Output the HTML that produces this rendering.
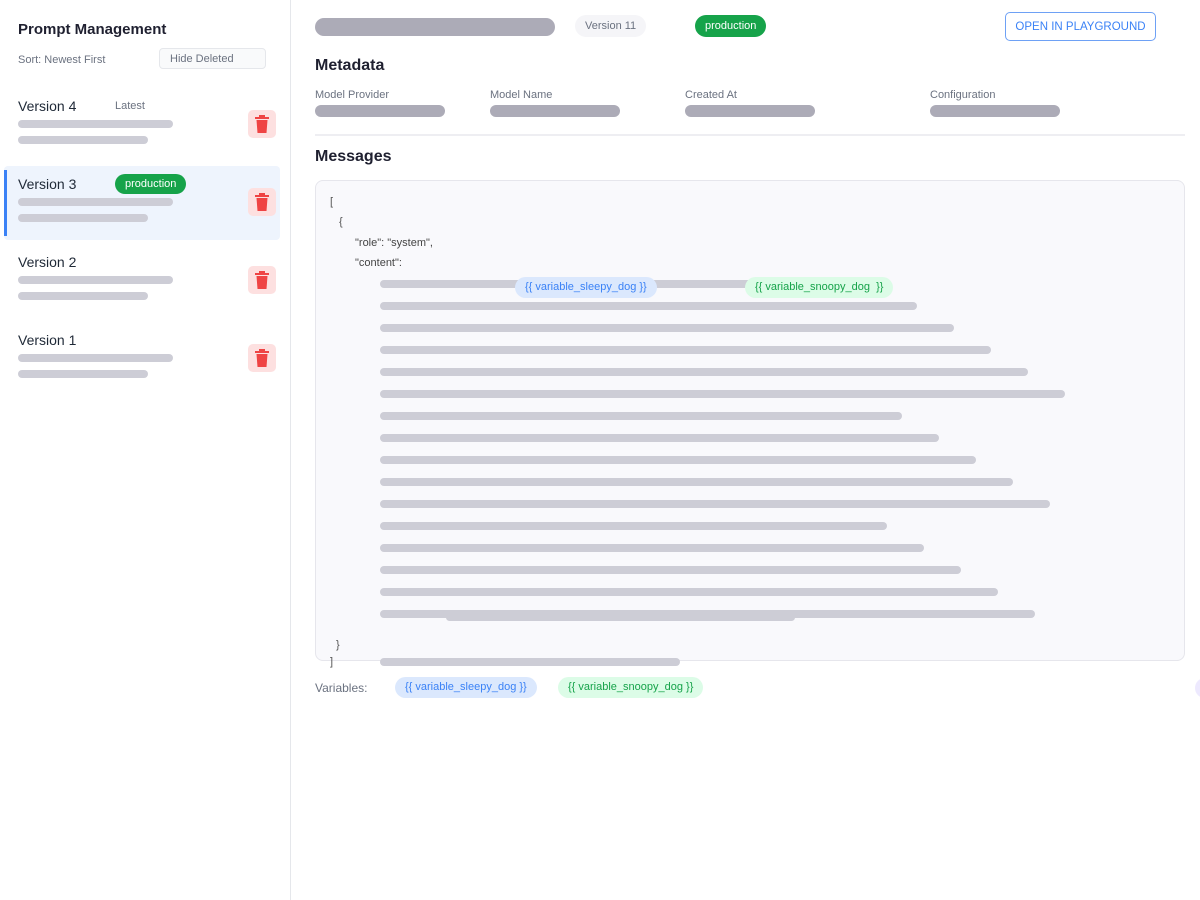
<!DOCTYPE html>
<html><head><style>
*{margin:0;padding:0;box-sizing:border-box}
body{width:1200px;height:900px;background:#fff;font-family:"Liberation Sans",sans-serif;position:relative;overflow:hidden;color:#1f2937}
.a{position:absolute}
.b{position:absolute;height:8px;border-radius:4px;background:#cdcdd6}
.d{position:absolute;height:12px;border-radius:6px;background:#acabb7}
.t{position:absolute;width:28px;height:28px;border-radius:5px;background:#fde0e0}
.t svg{position:absolute;left:6px;top:5px}
.s{font-size:12px;color:#6b7280}
.pill{position:absolute;border-radius:11px;font-size:11px;padding:0 10px;line-height:20px}
</style></head><body>
<div class="a" style="left:290px;top:0;width:1px;height:900px;background:#e5e7eb"></div>
<div class="a" style="left:18px;top:21px;font-size:15px;font-weight:bold;color:#1f2030">Prompt Management</div>
<div class="a s" style="left:18px;top:54px;font-size:11px">Sort: Newest First</div>
<div class="a" style="left:159px;top:48px;width:107px;height:21px;border:1px solid #e5e7eb;border-radius:4px;background:#f9fafb;font-size:11px;color:#6b7280;padding-left:10px;line-height:20px">Hide Deleted</div>

<div class="a" style="left:4px;top:166px;width:276px;height:74px;background:#eef4fd;border-radius:4px"></div>
<div class="a" style="left:4px;top:170px;width:3px;height:66px;background:#3b82f6"></div>

<div class="a" style="left:18px;top:98px;font-size:14px">Version 4</div>
<div class="a s" style="left:115px;top:100px;font-size:11px">Latest</div>
<div class="b" style="left:18px;top:120px;width:155px"></div><div class="b" style="left:18px;top:136px;width:130px"></div>
<div class="t" style="left:248px;top:110px"><svg width="16" height="18" viewBox="0 0 16 18"><rect x="1" y="2" width="14" height="2" fill="#ef4444"/><rect x="5" y="0" width="6" height="3" fill="#ef4444"/><path d="M2.5 5h11l-1 13h-9z" fill="#ef4444"/></svg></div>

<div class="a" style="left:18px;top:176px;font-size:14px">Version 3</div>
<div class="pill" style="left:115px;top:174px;background:#16a34a;color:#fff">production</div>
<div class="b" style="left:18px;top:198px;width:155px"></div><div class="b" style="left:18px;top:214px;width:130px"></div>
<div class="t" style="left:248px;top:188px"><svg width="16" height="18" viewBox="0 0 16 18"><rect x="1" y="2" width="14" height="2" fill="#ef4444"/><rect x="5" y="0" width="6" height="3" fill="#ef4444"/><path d="M2.5 5h11l-1 13h-9z" fill="#ef4444"/></svg></div>

<div class="a" style="left:18px;top:254px;font-size:14px">Version 2</div>
<div class="b" style="left:18px;top:276px;width:155px"></div><div class="b" style="left:18px;top:292px;width:130px"></div>
<div class="t" style="left:248px;top:266px"><svg width="16" height="18" viewBox="0 0 16 18"><rect x="1" y="2" width="14" height="2" fill="#ef4444"/><rect x="5" y="0" width="6" height="3" fill="#ef4444"/><path d="M2.5 5h11l-1 13h-9z" fill="#ef4444"/></svg></div>

<div class="a" style="left:18px;top:332px;font-size:14px">Version 1</div>
<div class="b" style="left:18px;top:354px;width:155px"></div><div class="b" style="left:18px;top:370px;width:130px"></div>
<div class="t" style="left:248px;top:344px"><svg width="16" height="18" viewBox="0 0 16 18"><rect x="1" y="2" width="14" height="2" fill="#ef4444"/><rect x="5" y="0" width="6" height="3" fill="#ef4444"/><path d="M2.5 5h11l-1 13h-9z" fill="#ef4444"/></svg></div>

<!-- main -->
<div class="a" style="left:315px;top:18px;width:240px;height:18px;border-radius:9px;background:#acabb7"></div>
<div class="pill" style="left:575px;top:15px;background:#f5f5f8;color:#6b7280;padding:0 10px;line-height:22px">Version 11</div>
<div class="pill" style="left:695px;top:15px;background:#16a34a;color:#fff;line-height:22px">production</div>
<div class="a" style="left:1005px;top:12px;width:151px;height:29px;border:1.5px solid #6ea1f5;border-radius:5px;color:#3b82f6;font-size:11.5px;text-align:center;line-height:28px">OPEN IN PLAYGROUND</div>

<div class="a" style="left:315px;top:57px;font-size:16px;font-weight:bold;color:#1f2030">Metadata</div>
<div class="a s" style="left:315px;top:89px;font-size:11px">Model Provider</div>
<div class="a s" style="left:490px;top:89px;font-size:11px">Model Name</div>
<div class="a s" style="left:685px;top:89px;font-size:11px">Created At</div>
<div class="a s" style="left:930px;top:89px;font-size:11px">Configuration</div>
<div class="d" style="left:315px;top:105px;width:130px"></div>
<div class="d" style="left:490px;top:105px;width:130px"></div>
<div class="d" style="left:685px;top:105px;width:130px"></div>
<div class="d" style="left:930px;top:105px;width:130px"></div>
<div class="a" style="left:315px;top:134px;width:870px;height:2px;background:#eeeef2"></div>
<div class="a" style="left:315px;top:148px;font-size:16px;font-weight:bold;color:#1f2030">Messages</div>

<div class="a" style="left:315px;top:180px;width:870px;height:481px;border:1px solid #e6e6ec;border-radius:8px;background:#f9f9fc"></div>
<div class="a" style="left:330px;top:196px;font-size:11px;color:#555">[</div>
<div class="a" style="left:339px;top:216px;font-size:11px;color:#555">{</div>
<div class="a" style="left:355px;top:237px;font-size:11px;color:#444">"role": "system",</div>
<div class="a" style="left:355px;top:257px;font-size:11px;color:#444">"content":</div>
<div class="b" style="left:380px;top:280px;width:380px"></div>
<div class="pill" style="left:515px;top:277px;background:#dbe8fd;color:#3b82f6;line-height:21px">{{ variable_sleepy_dog }}</div>
<div class="pill" style="left:745px;top:277px;background:#dcfce7;color:#16a34a;line-height:21px">{{ variable_snoopy_dog&nbsp; }}</div>
<div class="b" style="left:380px;top:302px;width:537px"></div>
<div class="b" style="left:380px;top:324px;width:574px"></div>
<div class="b" style="left:380px;top:346px;width:611px"></div>
<div class="b" style="left:380px;top:368px;width:648px"></div>
<div class="b" style="left:380px;top:390px;width:685px"></div>
<div class="b" style="left:380px;top:412px;width:522px"></div>
<div class="b" style="left:380px;top:434px;width:559px"></div>
<div class="b" style="left:380px;top:456px;width:596px"></div>
<div class="b" style="left:380px;top:478px;width:633px"></div>
<div class="b" style="left:380px;top:500px;width:670px"></div>
<div class="b" style="left:380px;top:522px;width:507px"></div>
<div class="b" style="left:380px;top:544px;width:544px"></div>
<div class="b" style="left:380px;top:566px;width:581px"></div>
<div class="b" style="left:380px;top:588px;width:618px"></div>
<div class="b" style="left:380px;top:610px;width:655px"></div>
<div class="b" style="left:446px;top:614px;width:349px;height:7px"></div>
<div class="a" style="left:336px;top:639px;font-size:11px;color:#555">}</div>
<div class="a" style="left:330px;top:656px;font-size:11px;color:#555">]</div>
<div class="b" style="left:380px;top:658px;width:300px"></div>

<div class="a s" style="left:315px;top:681px;font-size:12px">Variables:</div>
<div class="pill" style="left:395px;top:677px;background:#dbe8fd;color:#3b82f6;line-height:21px">{{ variable_sleepy_dog }}</div>
<div class="pill" style="left:558px;top:677px;background:#dcfce7;color:#16a34a;line-height:21px">{{ variable_snoopy_dog }}</div>
<div class="a" style="left:1195px;top:678px;width:20px;height:20px;border-radius:10px;background:#ede9fe"></div>
</body></html>
